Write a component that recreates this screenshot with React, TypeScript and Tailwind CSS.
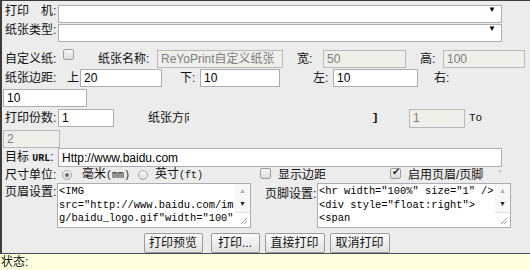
import React from 'react';

const Label = ({ children, className = '' }: { children: React.ReactNode; className?: string }) => (
  <span className={`text-[12px] leading-[18px] text-[#111] whitespace-nowrap shrink-0 ${className}`}>{children}</span>
);

const Field = ({ value, className = '', disabled = false }: { value: string; className?: string; disabled?: boolean }) => (
  <input
    readOnly
    value={value}
    className={`h-[18px] shrink-0 border px-[3px] text-[12px] outline-none ${
      disabled ? 'bg-[#efefea] border-[#b9b9b9] text-[#7d7d7d]' : 'bg-white border-[#abadb3] text-black'
    } ${className}`}
  />
);

const Dropdown = () => (
  <div className="relative w-[444px] h-[18px] shrink-0">
    <select className="w-full h-full appearance-none bg-white border border-[#abadb3] outline-none text-[12px]">
      <option></option>
    </select>
    <span className="absolute right-[6px] top-[4px] text-[8px] leading-none text-black pointer-events-none">▼</span>
  </div>
);

const Check = ({ checked = false, className = '' }: { checked?: boolean; className?: string }) => (
  <span
    className={`relative w-[11px] h-[11px] shrink-0 rounded-[2px] border border-[#9c9c9c] bg-gradient-to-b from-[#f7f7f7] to-[#dcdcdc] ${className}`}
  >
    {checked && (
      <span className="absolute left-[1px] -top-[2px] text-[10px] leading-none text-[#222]">✔</span>
    )}
  </span>
);

const Radio = ({ checked = false }: { checked?: boolean }) => (
  <span className="relative w-[10px] h-[10px] shrink-0 rounded-full border border-[#a5a5a5] bg-gradient-to-b from-[#f8f8f8] to-[#dedede] flex items-center justify-center">
    {checked && <span className="w-[4px] h-[4px] rounded-full bg-[#6c6c6c]" />}
  </span>
);

const Btn = ({ children, className = '' }: { children: React.ReactNode; className?: string }) => (
  <button className={`h-[20px] shrink-0 rounded-[2px] border border-[#9a9a9a] bg-gradient-to-b from-[#fbfbfb] to-[#e2e2e2] text-[12px] leading-none text-[#111] ${className}`}>
    {children}
  </button>
);

// textarea with an old-style scrollbar drawn beside it
const Memo = ({ value }: { value: string }) => (
  <div className="flex w-[194px] h-[45px] shrink-0 border border-[#abadb3] bg-white">
    <textarea
      readOnly
      value={value}
      className="w-[177px] h-full resize-none overflow-hidden px-[1px] pt-[1px] text-[10.4px] leading-[13.5px] text-black outline-none bg-white font-['Liberation_Mono',monospace]"
    />
    <div className="w-[15px] h-full flex flex-col bg-[#f7f7f7]">
      <div className="h-[13px] flex items-center justify-center text-[7px] leading-none text-[#a8a8a8]">▲</div>
      <div className="h-[13px] flex items-center justify-center text-[7px] leading-none text-[#222]">▼</div>
      <div className="flex-1" />
      <div className="h-[15px] bg-white border-t border-[#e2e2e2] flex items-end justify-end p-[2px]">
        <svg width="8" height="8" viewBox="0 0 8 8">
          <path d="M7 1 L1 7 M7 4 L4 7" stroke="#a0a0a0" strokeWidth="1" />
        </svg>
      </div>
    </div>
  </div>
);

const header = '<IMG src="http://www.baidu.com/img/baidu_logo.gif"width="100" height="60">';
const footer =
  '<hr width="100%" size="1" />\n<div style="float:right">\n<span\nstyle="font-size:12px">第<span tdata="PageNO">##</span>页</span>\n</div>';

export default function App() {
  return (
    <div className="w-[530px] h-[270px] overflow-hidden bg-[#ececec] flex flex-col font-['Liberation_Sans','Noto_Sans_CJK_SC',sans-serif]">
      <div className="flex-1 flex flex-col border-l-2 border-t border-[#3c3c3c] pl-[1px]">
        {/* printer / paper type */}
        <div className="flex items-center h-[18px] mt-[1px]">
          <Label className="w-[55px] pl-[2px]">打印　机:</Label>
          <Dropdown />
        </div>
        <div className="flex items-center h-[18px] mt-[1px]">
          <Label className="w-[55px] pl-[2px]">纸张类型:</Label>
          <Dropdown />
        </div>

        {/* custom paper */}
        <div className="flex items-center h-[17px] mt-[11px]">
          <Label className="w-[60px] pl-[2px]">自定义纸:</Label>
          <Check className="-mt-[8px]" />
          <Label className="ml-[24px] w-[59px]">纸张名称:</Label>
          <Field disabled value="ReYoPrint自定义纸张" className="w-[126px] h-[17px]" />
          <Label className="ml-[14px] w-[26px]">宽:</Label>
          <Field disabled value="50" className="w-[83px] h-[17px]" />
          <Label className="ml-[14px] w-[23px]">高:</Label>
          <Field disabled value="100" className="w-[82px] h-[17px]" />
        </div>

        {/* margins */}
        <div className="flex items-center h-[18px] mt-[2px]">
          <Label className="w-[64px] pl-[2px]">纸张边距:</Label>
          <Label className="w-[13px]">上:</Label>
          <Field value="20" className="w-[82px]" />
          <Label className="ml-[18px] w-[20px]">下:</Label>
          <Field value="10" className="w-[80px]" />
          <Label className="ml-[33px] w-[20px]">左:</Label>
          <Field value="10" className="w-[85px]" />
          <Label className="ml-[16px]">右:</Label>
        </div>
        <div className="flex items-center h-[18px] mt-[2px]">
          <Field value="10" className="w-[84px]" />
        </div>

        {/* copies */}
        <div className="flex items-center h-[18px] mt-[2px]">
          <Label className="w-[55px] pl-[2px]">打印份数:</Label>
          <Field value="1" className="w-[56px]" />
          <Label className="ml-[34px] w-[41px] overflow-hidden">纸张方向:</Label>
          <span className="ml-[183px] w-[6px] text-[11px] font-bold leading-[18px] font-['Liberation_Mono',monospace]">]</span>
          <Field disabled value="1" className="ml-[31px] w-[56px] h-[19px]" />
          <span className="ml-[4px] text-[11px] leading-[18px] font-['Liberation_Mono',monospace] text-[#111]">To</span>
        </div>
        <div className="flex items-center h-[18px] mt-[3px]">
          <Field disabled value="2" className="w-[57px]" />
        </div>

        {/* url */}
        <div className="flex items-center h-[19px]">
          <Label className="w-[55px] pl-[2px]">
            目标 <span className="text-[10px] font-['Liberation_Mono',monospace] font-bold">URL</span>:
          </Label>
          <Field value="Http://www.baidu.com" className="w-[444px] h-[19px]" />
        </div>

        {/* unit + toggles */}
        <div className="flex items-center h-[16px]">
          <Label className="w-[59px] pl-[2px] leading-[16px]">尺寸单位:</Label>
          <Radio checked />
          <Label className="ml-[10px] w-[56px] leading-[16px]">
            毫米<span className="text-[10px] font-['Liberation_Mono',monospace]">(mm)</span>
          </Label>
          <Radio />
          <Label className="ml-[7px] w-[105px] leading-[16px]">
            英寸<span className="text-[10px] font-['Liberation_Mono',monospace]">(ft)</span>
          </Label>
          <Check className="-mt-[4px]" />
          <Label className="ml-[7px] w-[112px] leading-[16px]">显示边距</Label>
          <Check checked className="-mt-[4px]" />
          <Label className="ml-[7px] leading-[16px]">启用页眉/页脚</Label>
          <span className="ml-[16px] -mt-[8px] w-[2px] h-[2px] bg-[#bcbcbc]" />
        </div>

        {/* header / footer */}
        <div className="flex items-start h-[45px]">
          <Label className="w-[54px] pl-[2px] leading-[14px]">页眉设置:</Label>
          <Memo value={header} />
          <Label className="ml-[14px] w-[52px] leading-[14px] mt-[2px]">页脚设置:</Label>
          <Memo value={footer} />
        </div>

        {/* buttons */}
        <div className="flex justify-center mt-[5px]">
          <Btn className="w-[59px]">打印预览</Btn>
          <Btn className="ml-[8px] w-[49px]">打印...</Btn>
          <Btn className="ml-[5px] w-[60px]">直接打印</Btn>
          <Btn className="ml-[5px] w-[60px]">取消打印</Btn>
        </div>
      </div>

      {/* status */}
      <div className="h-[17px] shrink-0 border-t border-[#4a4a4a] bg-[#ffffe0] pl-[1px] text-[12px] leading-[16px] text-[#111]">
        状态:
      </div>
    </div>
  );
}
